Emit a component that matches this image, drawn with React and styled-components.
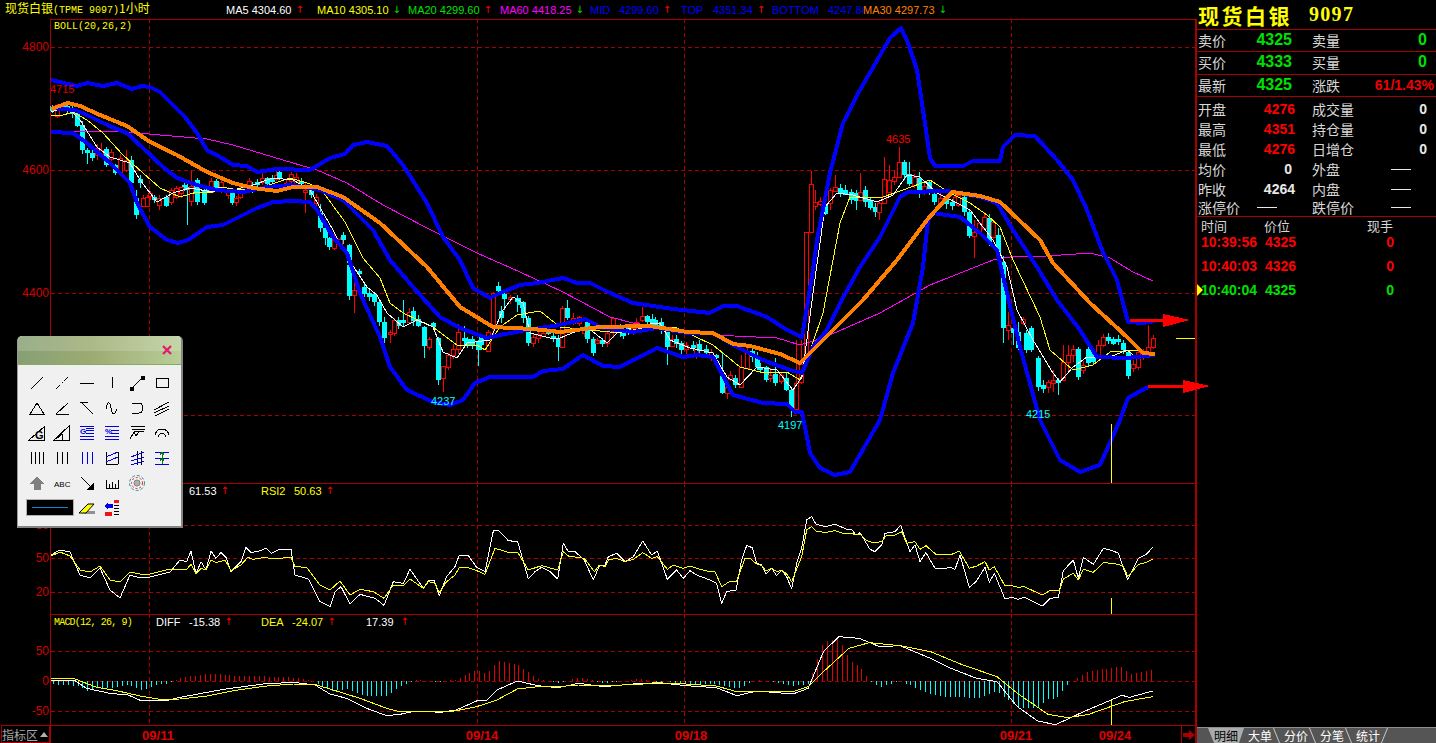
import React from "react";
import styled, { createGlobalStyle } from "styled-components";

const GlobalStyle = createGlobalStyle`
  html, body {
    margin: 0;
    padding: 0;
    background: #000;
  }
`;

const GRID = "#a80000";
const SANS = `"Liberation Sans", "Noto Sans CJK SC", sans-serif`;
const CJK = `"Noto Sans CJK SC", "Liberation Sans", sans-serif`;
const MONO = `"Liberation Mono", "Noto Sans CJK SC", monospace`;

// price lines, in page pixels
const UPPER =
  "51,80 77,86 87,83 103,86 117,83 132,89 142,86 150,87 160,92 173,105 185,117 197,133 207,150 220,157 233,165 247,166 257,172 277,169 310,170 330,158 345,154 353,145 367,142 387,146 403,165 427,203 443,237 460,260 473,288 490,298 500,293 520,285 537,283 563,278 577,283 590,283 610,293 633,303 673,309 710,313 723,306 737,306 767,317 787,330 802,337 813,270 817,240 830,173 843,123 860,90 890,38 901,28 908,43 917,70 923,110 930,158 935,166 963,166 973,161 1000,161 1003,147 1015,135 1035,136 1057,160 1073,180 1087,210 1102,250 1117,280 1128,322 1143,323 1155,321";
const MID =
  "51,108 75,110 87,115 107,125 127,133 143,148 163,167 177,178 197,185 217,190 243,192 267,187 293,185 320,190 343,200 373,230 390,260 413,287 440,317 460,328 487,338 500,335 527,330 560,325 585,319 603,328 633,332 657,328 687,333 713,333 733,345 763,360 790,370 802,373 813,347 827,330 840,303 860,267 880,237 900,197 908,192 947,191 980,197 997,203 1013,230 1037,267 1057,300 1080,330 1097,357 1127,358 1155,355";
const LOWER =
  "51,132 73,133 87,143 110,163 130,183 137,203 150,227 167,240 178,243 188,240 207,227 223,225 257,208 273,202 293,201 310,202 317,210 333,237 347,253 360,293 380,337 390,367 407,390 433,402 450,405 463,400 475,383 490,377 513,377 533,377 543,371 563,369 583,355 603,366 620,367 657,348 683,357 697,355 713,357 733,395 763,403 787,404 795,412 802,412 810,453 820,468 835,475 850,472 880,420 893,373 913,323 923,267 928,220 933,213 960,217 980,233 997,250 1007,293 1020,347 1040,420 1060,460 1080,472 1100,465 1120,420 1128,398 1148,387";
const MA30 =
  "51,109 68,103 80,106 100,115 127,126 150,142 177,155 207,172 233,183 253,188 277,191 293,187 317,187 343,197 380,223 427,267 460,307 493,327 533,329 560,332 600,327 650,326 687,332 713,333 733,344 750,346 780,354 800,363 830,333 863,300 897,260 927,220 952,192 980,196 1000,202 1040,240 1053,263 1090,303 1127,337 1143,353 1155,354";
const MA60 =
  "60,131 117,131 160,135 207,139 233,145 293,163 317,170 347,183 383,205 427,228 477,253 520,272 563,292 610,317 633,323 713,335 777,338 800,345 823,338 880,313 930,285 993,260 1010,257 1047,256 1090,253 1110,258 1133,272 1153,281";
const MA10 =
  "51,115 60,116 73,112 87,120 103,133 123,155 143,173 160,188 180,197 197,192 213,192 220,187 240,190 263,187 290,178 307,183 320,188 345,222 363,258 380,278 390,303 403,313 433,327 457,345 477,345 485,350 500,327 517,315 540,311 560,327 590,330 620,333 647,327 677,328 713,345 740,367 760,372 787,372 800,380 823,313 840,223 850,197 880,198 903,190 930,180 950,193 970,203 987,215 1000,227 1013,260 1040,317 1050,350 1073,370 1093,365 1110,352 1143,350";
const MA5 =
  "51,112 67,107 80,120 97,147 110,157 130,163 140,180 157,202 173,193 190,188 213,192 233,190 253,185 273,178 293,180 310,190 333,230 347,257 367,287 377,295 387,313 403,327 417,320 433,327 443,352 457,358 467,343 490,340 503,310 513,297 523,303 530,333 550,338 560,338 587,327 607,343 617,333 640,325 660,323 670,340 690,348 713,353 727,377 740,385 757,367 777,370 793,390 802,377 813,293 825,207 837,193 853,195 877,202 893,195 907,175 920,177 937,193 957,203 970,210 993,240 1007,267 1017,310 1033,340 1053,373 1060,382 1073,367 1087,357 1110,357 1127,350 1137,358 1150,357";

const parse = (text) => text.split(" ").map((p) => p.split(",").map(Number));
const toPoints = (pts) => pts.map((p) => p.join(",")).join(" ");
const fromZoom = (pts, ox, oy, sx = 3) => pts.map(([x, y]) => [ox + x / sx, oy + y / 3]);

const interp = (pts, x) => {
  if (x <= pts[0][0]) return pts[0][1];
  for (let i = 1; i < pts.length; i++) {
    if (x <= pts[i][0]) {
      const [x0, y0] = pts[i - 1];
      const [x1, y1] = pts[i];
      return y0 + ((y1 - y0) * (x - x0)) / (x1 - x0);
    }
  }
  return pts[pts.length - 1][1];
};

const seeded = (i) => {
  const v = Math.sin(i * 12.9898) * 43758.5453;
  return v - Math.floor(v);
};

// x, body top, body bottom, kind, wick top, wick bottom
const BIG_CANDLES = [
  [77, 113, 126, "c"], [82, 125, 150, "c"], [87, 150, 153, "c", 148, 164], [92, 153, 158, "c"], [97, 148, 155, "r", 144, 160],
  [101, 150, 154, "r", 143, 158], [106, 149, 165, "c"], [115, 165, 173, "c"], [120, 158, 172, "r"], [126, 160, 170, "r", 150, 172],
  [131, 160, 183, "c", 156, 186], [136, 198, 215, "c", 190, 219], [143, 198, 206, "r"], [147, 197, 206, "r"], [166, 197, 206, "c"],
  [171, 190, 202, "r"], [176, 188, 197, "r"], [181, 187, 193, "r", 187, 198], [187, 187, 190, "c", 184, 225], [191, 186, 201, "r", 170, 206],
  [197, 180, 202, "c", 178, 205], [204, 190, 203, "c"], [211, 181, 192, "r"], [216, 181, 188, "c"], [221, 182, 190, "r"],
  [232, 190, 203, "c"], [236, 198, 202, "r"], [240, 190, 197, "r"], [249, 181, 186, "r", 178, 186], [267, 178, 184, "c"], [279, 172, 178, "c", 168, 180],
  [286, 183, 186, "r"], [305, 190, 192, "r", 183, 213], [320, 213, 228, "c", 204, 232], [325, 228, 238, "c", 220, 245], [329, 238, 247, "c"],
  [334, 238, 248, "r"], [343, 235, 240, "c", 232, 244], [349, 245, 263, "c"], [349, 265, 296, "c"], [354, 290, 295, "r", 283, 313],
  [364, 287, 294, "c"], [369, 293, 297, "c"], [374, 294, 302, "c"], [379, 302, 322, "c"], [384, 322, 338, "c"], [390, 332, 334, "r", 330, 343],
  [394, 320, 333, "r", 318, 336], [403, 320, 323, "c", 300, 327], [409, 312, 322, "r"], [413, 311, 321, "c"], [418, 319, 326, "c"],
  [424, 327, 346, "c", 326, 358], [429, 339, 347, "r"], [438, 338, 380, "c"], [443, 366, 378, "r", 366, 392], [448, 355, 367, "r"],
  [453, 349, 355, "r"], [458, 332, 349, "r", 324, 354], [464, 338, 341, "c", 326, 345], [472, 339, 345, "c"], [478, 342, 350, "c", 340, 366],
  [488, 332, 351, "r"], [493, 293, 327, "r", 292, 334], [498, 286, 291, "c"], [504, 294, 299, "c", 292, 310], [510, 297, 299, "r"], [517, 298, 302, "c", 295, 312],
  [523, 302, 318, "c"], [528, 318, 343, "c", 316, 346], [533, 337, 343, "r"], [538, 334, 338, "r"], [543, 333, 336, "r"], [548, 330, 334, "c"],
  [553, 336, 338, "c"], [558, 338, 347, "c", 335, 361], [562, 308, 347, "r", 306, 348], [567, 308, 318, "c", 300, 320], [573, 318, 323, "r"],
  [579, 317, 323, "r"], [587, 322, 339, "c"], [593, 339, 353, "c", 337, 356], [597, 340, 343, "r"], [602, 340, 344, "c"], [607, 333, 343, "r"],
  [613, 318, 331, "r", 318, 338], [620, 327, 333, "c"], [636, 322, 327, "r"], [642, 316, 320, "r", 307, 322], [647, 316, 322, "c"], [655, 320, 325, "c"],
  [661, 322, 330, "c"], [667, 332, 347, "c", 330, 365], [672, 339, 346, "r"], [676, 339, 344, "c"], [681, 343, 350, "c"], [686, 345, 349, "r"],
  [693, 345, 348, "c"], [699, 344, 351, "c"], [706, 349, 353, "c"], [716, 355, 358, "c"], [722, 376, 393, "c", 353, 394], [727, 387, 393, "r", 385, 399],
  [741, 367, 387, "r", 355, 388], [747, 351, 368, "r", 348, 368], [752, 351, 357, "c"], [757, 358, 367, "c", 352, 370], [766, 367, 380, "c"],
  [770, 375, 378, "r", 368, 382], [775, 374, 383, "c", 358, 386], [781, 375, 381, "r"], [786, 378, 390, "c"], [791, 390, 408, "c", 388, 417],
  [796, 383, 409, "r", 340, 410], [801, 364, 382, "r", 340, 384], [806, 232, 360, "r", 232, 360], [811, 184, 232, "r", 171, 232], [815, 202, 206, "r", 190, 210],
  [820, 201, 204, "r", 197, 206], [825, 205, 214, "c"], [830, 190, 203, "r", 188, 210], [835, 187, 191, "r", 175, 192], [840, 188, 193, "c"], [845, 190, 195, "c", 185, 195],
  [851, 192, 200, "c"], [856, 193, 201, "c", 190, 210], [860, 192, 200, "r", 173, 200], [865, 190, 202, "c"], [870, 200, 208, "c", 198, 210], [875, 207, 212, "c"],
  [879, 203, 212, "r", 200, 220], [884, 179, 203, "r", 157, 204], [889, 180, 192, "r", 165, 192], [894, 177, 181, "r", 170, 185], [899, 162, 177, "r", 147, 178],
  [904, 162, 175, "c"], [909, 174, 184, "c", 162, 186], [914, 177, 185, "r"], [919, 178, 193, "c", 172, 198], [924, 186, 192, "r"], [929, 182, 193, "c"],
  [934, 194, 202, "c"], [940, 198, 203, "r"], [946, 199, 204, "c"], [952, 202, 206, "c"], [958, 195, 205, "r"], [964, 197, 212, "c"], [969, 212, 236, "c"],
  [974, 232, 236, "r", 220, 258], [979, 223, 232, "r"], [984, 217, 228, "r"], [989, 218, 243, "c"], [993, 222, 237, "r"], [998, 235, 257, "c", 228, 260],
  [1003, 262, 328, "c", 256, 343], [1008, 325, 330, "r", 312, 340], [1013, 328, 333, "c", 316, 345], [1018, 332, 348, "c", 322, 350], [1026, 333, 350, "c"], [1031, 328, 350, "c"],
  [1038, 358, 387, "c", 356, 391], [1043, 385, 389, "c", 380, 393], [1048, 382, 387, "r", 380, 393], [1053, 380, 383, "r", 370, 392], [1058, 380, 383, "c", 378, 395],
  [1063, 362, 380, "r", 345, 380], [1068, 355, 362, "r", 345, 372], [1073, 349, 355, "r", 345, 362], [1078, 349, 377, "c", 347, 380], [1083, 365, 370, "r"], [1088, 349, 363, "c"],
  [1093, 352, 362, "c"], [1098, 345, 355, "r"], [1103, 337, 345, "r", 334, 347], [1108, 337, 341, "c"], [1113, 339, 344, "c"], [1118, 339, 342, "c"], [1123, 343, 350, "c"],
  [1128, 352, 376, "c"], [1133, 364, 368, "r"], [1138, 352, 367, "r"], [1143, 352, 356, "r"], [1148, 347, 352, "r", 325, 352], [1153, 338, 347, "r"],
];

const buildCandles = () => {
  const line = parse(MA5);
  const filler = [];
  for (let i = 0; i < 225; i++) {
    const x = Math.round(52 + i * 4.88);
    if (x > 1150) break;
    if (BIG_CANDLES.some((c) => Math.abs(c[0] - x) < 3)) continue;
    const mid = interp(line, x) + (seeded(i) - 0.5) * 6;
    const half = 1 + seeded(i + 40) * 3;
    filler.push([
      x,
      Math.round(mid - half),
      Math.round(mid + half),
      seeded(i + 90) > 0.5 ? "c" : "r",
    ]);
  }
  return [...filler, ...BIG_CANDLES].map((c, i) => ({
    x: c[0],
    top: c[1],
    bottom: c[2],
    kind: c[3],
    high: c[4] ?? Math.round(c[1] - 1 - seeded(i) * 4),
    low: c[5] ?? Math.round(c[2] + 1 + seeded(i + 7) * 4),
  }));
};

const CANDLES = buildCandles();

// rsi, taken from the two zoomed strips
const RSI_WHITE = [
  [51, 555], [60, 550], [70, 552], [80, 575], [90, 578], [100, 568], [110, 590], [120, 598], [130, 575], [140, 578], [150, 577], [170, 572],
  ...fromZoom([[0,240],[20,245],[33,213],[48,282],[63,245],[78,270],[93,213],[108,235],[123,217],[138,232],[153,275],[183,245],[198,202],[213,217],[233,215],[258,205],[275,220],[300,207],[333,207],[345,285],[385,297],[420,365],[450,380],[465,335],[483,320],[510,372],[540,343],[585,355],[612,376],[640,305],[670,310],[690,268],[730,325],[745,303],[762,300],[778,347],[800,290],[825,260],[838,225],[865,227],[890,262],[915,275],[940,153],[955,150],[985,182],[1013,185],[1045,297],[1065,275],[1085,262],[1110,275],[1133,297],[1150,190],[1165,215],[1183,213],[1213,240],[1240,300],[1258,258],[1275,255],[1285,230],[1310,220],[1335,245],[1360,230],[1388,183],[1415,225],[1432,213],[1462,298],[1490,270],[1510,295]], 180, 480),
  ...fromZoom([[0,272],[20,285],[60,300],[80,310],[95,370],[110,335],[138,330],[155,240],[170,197],[187,203],[200,250],[215,255],[228,282],[245,265],[260,287],[275,270],[290,290],[305,327],[320,250],[335,205],[350,120],[365,110],[378,133],[408,140],[435,132],[470,148],[485,148],[498,165],[510,158],[540,208],[555,215],[575,195],[585,160],[615,155],[632,136],[660,215],[675,195],[690,245],[708,218],[735,265],[760,267],[780,262],[795,268],[810,225],[838,322],[858,305],[885,262],[898,307],[913,280],[945,357],[965,352],[985,358],[1003,352],[1050,375],[1060,376],[1080,355],[1105,352],[1120,272],[1150,240],[1165,295],[1180,232],[1210,253],[1240,205],[1270,213],[1285,220],[1313,300],[1345,235],[1370,222],[1388,202]], 690, 480),
];
const RSI_YELLOW = [
  [51, 556], [60, 552], [70, 556], [80, 570], [90, 572], [100, 566], [110, 580], [120, 582], [130, 572], [140, 574], [150, 574], [170, 569],
  ...fromZoom([[0,268],[20,268],[33,253],[48,282],[63,265],[78,270],[93,240],[108,248],[135,240],[153,272],[183,255],[203,232],[220,238],[255,232],[275,237],[333,232],[345,260],[380,262],[420,315],[450,330],[480,303],[510,345],[540,328],[580,335],[612,355],[640,315],[670,318],[690,297],[730,325],[745,305],[765,310],[778,338],[800,305],[825,285],[838,262],[860,262],[890,272],[915,283],[945,205],[985,217],[1013,217],[1045,270],[1085,257],[1133,270],[1150,215],[1165,228],[1213,235],[1243,275],[1258,255],[1275,260],[1285,240],[1310,235],[1335,245],[1360,238],[1388,218],[1415,235],[1432,230],[1462,268],[1480,255],[1510,265]], 180, 480),
  ...fromZoom([[0,258],[20,265],[50,273],[75,275],[95,320],[118,305],[140,303],[165,235],[180,235],[200,252],[215,257],[228,273],[245,265],[260,275],[275,270],[290,282],[305,305],[335,230],[350,150],[365,140],[380,155],[410,157],[435,152],[460,160],[485,160],[498,165],[510,162],[530,182],[550,188],[575,185],[590,165],[615,165],[635,155],[650,190],[675,185],[690,208],[708,197],[740,225],[785,223],[808,213],[838,265],[860,258],[885,245],[898,270],[913,260],[945,318],[965,317],[985,322],[1003,320],[1050,342],[1060,343],[1080,332],[1108,332],[1120,297],[1150,280],[1165,300],[1180,268],[1210,277],[1240,248],[1270,250],[1300,258],[1313,290],[1345,253],[1370,247],[1388,238]], 690, 480),
];

const MACD_WHITE = [
  ...fromZoom([[152,240],[225,242],[260,265],[330,280],[385,285],[425,303],[500,302],[540,292],[670,268],[790,252],[880,247],[945,255],[990,282],[1040,295],[1100,325],[1160,347]], 0, 600),
  ...fromZoom([[0,298],[30,288],[80,292],[110,285],[150,258],[170,255],[190,225],[230,198],[270,212],[310,218],[350,205],[400,215],[470,205],[520,205],[560,212],[620,218],[660,242],[700,228],[770,237],[800,220],[830,110],[860,65],[900,70],[940,95],[980,92],[1040,130],[1080,160],[1130,190],[1170,200],[1210,275],[1250,318],[1285,329],[1340,290],[1415,241],[1430,247],[1475,228]], 400, 615, 1.96),
];
const MACD_YELLOW = [
  ...fromZoom([[152,235],[220,235],[290,262],[350,272],[420,288],[480,298],[540,297],[620,288],[700,272],[800,258],[880,252],[950,255],[1000,270],[1080,295],[1160,325]], 0, 600),
  ...fromZoom([[0,290],[100,290],[150,275],[190,255],[230,222],[270,215],[310,215],[350,210],[400,212],[470,208],[500,203],[560,207],[620,213],[660,230],[770,230],[800,215],[830,170],[880,100],[920,83],[980,92],[1040,110],[1100,148],[1170,185],[1210,235],[1270,298],[1310,308],[1350,298],[1420,260],[1475,245]], 400, 615, 1.96),
];

const MACD_BARS = [];
for (let x = 53; x < 1155; x += 4.9) {
  const px = Math.round(x);
  const gap = (interp(MACD_YELLOW, px) - interp(MACD_WHITE, px)) * 2;
  MACD_BARS.push({ x: px, value: Math.max(-42, Math.min(46, gap)) });
}

const Screen = styled.div`
  position: relative;
  display: flex;
  width: 1436px;
  height: 743px;
  overflow: hidden;
  background: #000;
  font-family: ${SANS};
`;

const ChartColumn = styled.main`
  display: flex;
  flex-direction: column;
  width: 1197px;
  flex: none;
`;

const TopBar = styled.header`
  display: flex;
  align-items: center;
  height: 19px;
  padding-left: 5px;
  box-sizing: border-box;
`;

const ChartTitle = styled.div`
  width: 221px;
  flex: none;
  color: #ffff00;
  font-family: ${CJK};
  font-size: 12px;
  line-height: 16px;
  white-space: nowrap;
`;

const Mono = styled.span`
  font-family: ${MONO};
  font-size: 10px;
`;

const TopItem = styled.div`
  display: flex;
  width: ${(p) => p.$w || 91}px;
  flex: none;
  overflow: hidden;
  color: ${(p) => p.$color};
  font-size: 11px;
  line-height: 16px;
  white-space: pre;
`;

const ItemName = styled.span`
  min-width: ${(p) => p.$min || 0}px;
`;

const Trend = styled.span`
  margin-left: ${(p) => p.$gap ?? 4}px;
  color: ${(p) => (p.$dir === "up" ? "#ff0000" : "#00e000")};
  font-family: "DejaVu Sans", sans-serif;
  font-size: 10px;
`;

const Pane = styled.section`
  position: relative;
  height: ${(p) => p.$h}px;
  flex: none;
`;

const PlotSvg = styled.svg`
  display: block;
  overflow: visible;
  shape-rendering: crispEdges;
`;

const AxisText = styled.text`
  fill: #d40000;
  font-family: ${SANS};
  font-size: 12px;
  text-anchor: end;
`;

const PeakText = styled.text`
  fill: ${(p) => p.$color};
  font-family: ${SANS};
  font-size: 11px;
`;

const PaneLegend = styled.div`
  position: absolute;
  left: 54px;
  top: ${(p) => p.$top}px;
  display: flex;
  align-items: center;
  height: 14px;
  font-size: 11px;
  white-space: pre;
`;

const IndicatorName = styled.span`
  width: ${(p) => p.$w}px;
  flex: none;
  color: #ffff00;
  font-family: ${MONO};
  font-size: 10px;
  letter-spacing: ${(p) => p.$tight || 0}px;
`;

const LegendValue = styled.span`
  display: flex;
  width: ${(p) => p.$w}px;
  flex: none;
  color: ${(p) => p.$color};
`;

const DateAxis = styled.footer`
  display: flex;
  height: 18px;
  flex: none;
`;

const IndicatorTab = styled.div`
  display: flex;
  align-items: center;
  gap: 2px;
  width: 49px;
  margin-left: 1px;
  box-sizing: border-box;
  border: 1px solid ${GRID};
  color: #a8a8a8;
  font-family: ${CJK};
  font-size: 12px;
  white-space: nowrap;
`;

const TabCaret = styled.i`
  width: 0;
  height: 0;
  border-left: 4px solid transparent;
  border-right: 4px solid transparent;
  border-bottom: 5px solid #b0b0b0;
`;

const DateTrack = styled.div`
  flex: 1;
  box-sizing: border-box;
  border-top: 1px solid ${GRID};
  border-left: 1px solid ${GRID};
`;

const DateLabel = styled.text`
  fill: #e00000;
  font-family: ${SANS};
  font-size: 13px;
  font-weight: bold;
  text-anchor: middle;
`;

const NextButton = styled.div`
  display: flex;
  align-items: center;
  justify-content: center;
  width: 16px;
  box-sizing: border-box;
  border-top: 1px solid ${GRID};
  border-left: 1px solid ${GRID};
  border-right: 2px solid ${GRID};
`;

const SidePanel = styled.aside`
  display: flex;
  flex-direction: column;
  flex: 1;
  min-width: 0;
  color: #d8d8d8;
`;

const QuoteTitle = styled.div`
  display: flex;
  align-items: center;
  height: 30px;
  padding-left: 1px;
  box-sizing: border-box;
  border-bottom: 1px solid ${GRID};
  color: #ffff00;
  font-weight: bold;
`;

const TitleName = styled.span`
  width: 111px;
  font-family: ${CJK};
  font-size: 21px;
  letter-spacing: 2.5px;
`;

const TitleCode = styled.span`
  font-family: "Liberation Serif", serif;
  font-size: 20px;
  letter-spacing: 1.3px;
`;

const QuoteRow = styled.div`
  display: grid;
  grid-template-columns: 60px 37px 1fr auto;
  align-items: center;
  height: ${(p) => p.$h}px;
  padding: 0 9px ${(p) => (p.$line ? 2 : 0)}px 1px;
  box-sizing: border-box;
  border-bottom: ${(p) => (p.$line ? `1px solid ${GRID}` : "none")};
`;

const RowLabel = styled.span`
  padding-left: ${(p) => (p.$second ? 17 : 0)}px;
  font-family: ${CJK};
  font-size: 14px;
  line-height: 16px;
  white-space: nowrap;
`;

const RowValue = styled.span`
  justify-self: end;
  margin-right: ${(p) => p.$shift || 0}px;
  color: ${(p) => p.$color || "#e8e8e8"};
  font-size: ${(p) => p.$size || 14}px;
  font-weight: bold;
  line-height: 16px;
  white-space: nowrap;
`;

const Dash = styled.span`
  justify-self: end;
  width: 20px;
  height: 1px;
  margin-right: ${(p) => p.$shift}px;
  background: #e8e8e8;
`;

const StatBlock = styled.div`
  height: 120px;
  padding-top: 2px;
  box-sizing: border-box;
  border-bottom: 1px solid ${GRID};
`;

const TickList = styled.div`
  flex: 1;
`;

const TickHeader = styled.div`
  display: grid;
  grid-template-columns: 63px 103px auto;
  height: 13px;
  padding-left: 4px;
  font-family: ${CJK};
  font-size: 13px;
  line-height: 18px;
`;

const TickRow = styled.div`
  position: relative;
  display: grid;
  grid-template-columns: 64px 99px 30px;
  align-items: center;
  height: 24px;
  padding-left: 4px;
  color: ${(p) => p.$color};
  font-size: 14px;
  font-weight: bold;

  &::before {
    content: "";
    display: ${(p) => (p.$current ? "block" : "none")};
    position: absolute;
    left: 0;
    top: 6px;
    border-top: 6px solid transparent;
    border-bottom: 6px solid transparent;
    border-left: 6px solid #ffff00;
  }
`;

const TickQty = styled.span`
  justify-self: end;
`;

const TabBar = styled.nav`
  display: flex;
  height: 16px;
  flex: none;
  padding-left: 11px;
  box-sizing: border-box;
  border-top: 1px solid #909090;
  background: #555;
`;

const ViewTab = styled.div`
  position: relative;
  width: 36px;
  flex: none;
  padding-left: ${(p) => (p.$active ? 6 : 4)}px;
  box-sizing: border-box;
  background: ${(p) => (p.$active ? "#ababab" : "transparent")};
  clip-path: ${(p) => (p.$active ? "polygon(0 0, 100% 0, calc(100% - 5px) 100%, 6px 100%)" : "none")};
  color: ${(p) => (p.$active ? "#000" : "#fff")};
  font-family: ${CJK};
  font-size: 12px;
  line-height: 15px;
  white-space: nowrap;

  &::after {
    content: "";
    display: ${(p) => (p.$active ? "none" : "block")};
    position: absolute;
    top: 0;
    bottom: 0;
    right: 3px;
    width: 1px;
    background: #c8c8c8;
    transform: skewX(${(p) => (p.$last ? -22 : 22)}deg);
  }
`;

const ToolWindow = styled.div`
  position: absolute;
  left: 17px;
  top: 336px;
  width: 166px;
  height: 192px;
  box-sizing: border-box;
  border-right: 2px solid #858585;
  border-bottom: 2px solid #858585;
  border-left: 1px solid #9a9a9a;
  border-radius: 5px 5px 0 0;
  background: #f0f0f0;
`;

const ToolHeader = styled.div`
  display: flex;
  align-items: center;
  justify-content: flex-end;
  height: 29px;
  padding-right: 8px;
  box-sizing: border-box;
  border-bottom: 1px solid #86ab63;
  border-radius: 5px 5px 0 0;
  background: linear-gradient(180deg, rgba(255, 255, 255, 0.16) 0 54%, transparent 54%),
    linear-gradient(90deg, #86a074, #9dab72 45%, #b9ce98);
`;

const ToolGrid = styled.div`
  display: grid;
  grid-template-columns: repeat(6, 25px);
  grid-auto-rows: 25px;
  padding: 5px 0 0 6px;
`;

const ToolCell = styled.button`
  display: flex;
  align-items: center;
  justify-content: center;
  grid-column: span ${(p) => p.$span || 1};
  padding: 0;
  border: 0;
  background: none;
`;

const LineSwatch = styled.span`
  display: flex;
  align-items: center;
  justify-content: center;
  width: 46px;
  height: 15px;
  margin-left: 2px;
  box-sizing: border-box;
  border: 1px solid #000;
  outline: 1px solid #b0b0b0;
  background: #000;

  &::after {
    content: "";
    width: 36px;
    height: 1px;
    background: #1482d2;
  }
`;

const Glyph = ({ children }) => (
  <svg width="18" height="18" viewBox="0 0 18 18" fill="none" stroke="#000" strokeWidth="1" shapeRendering="crispEdges">
    {children}
  </svg>
);

const BLUE = "#0000e0";

const TOOL_ICONS = [
  <path d="M3 15L15 3" />,
  <path d="M3 15L7 11M9 9L10 8M11 7L15 3" />,
  <path d="M2 9H16" />,
  <path d="M9 3V14" />,
  <g><path d="M3 15L15 3" /><rect x="2" y="13" width="3" height="3" fill="#000" /><rect x="13" y="2" width="3" height="3" fill="#000" /></g>,
  <rect x="3" y="4" width="12" height="9" />,
  <path d="M2 15H16L9 4Z" />,
  <path d="M3 15H16M3 15L15 4" />,
  <path d="M2 3H10M3 3L15 15" />,
  <path d="M3 10C4 2 7 2 8 9S11 17 14 10" />,
  <path d="M4 4H11C16 4 16 14 11 14H4" />,
  <path d="M1 11L16 3M1 14L16 7M2 17L16 10" />,
  <g><path d="M1 16H16V3Z" /><text x="7" y="15" fill="#000" stroke="none" fontSize="11" fontWeight="bold" fontFamily="Liberation Sans">G</text></g>,
  <path d="M1 16H16V2ZM3 15L9 10L10 16" />,
  <g stroke={BLUE}><path d="M2 2H16M2 15H16M2 12H16M8 9H16M8 6H16M8 4H16" /><text x="2" y="10" fill={BLUE} stroke="none" fontSize="8" fontWeight="bold" fontFamily="Liberation Sans">G</text></g>,
  <g stroke={BLUE}><path d="M2 2H16M2 15H16M2 12H16M8 9H16M8 6H16" /><text x="2" y="10" fill={BLUE} stroke="none" fontSize="8" fontWeight="bold" fontFamily="Liberation Sans">%</text></g>,
  <g><path d="M3 2H17M4 5H17" /><path d="M6 7H16" /><path d="M2 15L6 8L8 12L11 8" /></g>,
  <path d="M2 11C4 3 14 3 16 11M5 13C7 8 11 8 13 13" />,
  <path d="M3 3V15M7 3V15M11 3V15M15 3V15" />,
  <path d="M4 3V15M9 3V15M14 3V15" />,
  <path d="M4 3V15M9 3V15M14 3V15" stroke={BLUE} />,
  <g><path d="M3 3V15H15M15 3V15" /><path d="M3 8L15 3M3 13L15 8" stroke={BLUE} /></g>,
  <g><path d="M9 2V16M13 2V16" /><path d="M3 8L16 3M3 12L16 8M3 16L16 12" stroke={BLUE} /></g>,
  <g><path d="M2 3H16M2 9H16M2 15H16" stroke={BLUE} /><path d="M9 3V15M7 6L9 3L11 6M7 12L9 9L11 12" stroke="#008000" /></g>,
  <path d="M9 3L15 9H12V15H6V9H3Z" fill="#808080" stroke="#808080" />,
  <text x="1" y="13" fill="#000" stroke="none" fontSize="8" fontFamily="Liberation Sans">ABC</text>,
  <g><path d="M3 3L13 13" /><path d="M15 15V10L10 15Z" fill="#000" /></g>,
  <path d="M3 6V14H15V6M6 10V14M9 8V14M12 10V14" />,
  <g>
    <circle cx="9" cy="9" r="7.5" stroke="#2c8c8c" strokeDasharray="3 2" shapeRendering="auto" />
    <circle cx="9" cy="9" r="5.5" stroke="#d02020" strokeDasharray="2 2" shapeRendering="auto" />
    <circle cx="9" cy="9" r="3" fill="#b0b0b0" stroke="#808080" shapeRendering="auto" />
  </g>,
];

const CloseMark = () => (
  <svg width="12" height="12" viewBox="0 0 12 12">
    <path d="M2 2L10 10M10 2L2 10" stroke="#e0206e" strokeWidth="2.4" />
  </svg>
);

const EraserIcon = () => (
  <svg width="18" height="18" viewBox="0 0 18 18">
    <path d="M6 15H17V12H9Z" fill="#909090" />
    <path d="M1 14L10 5H16L8 14Z" fill="#ffff00" stroke="#000" />
  </svg>
);

const ColorListIcon = () => (
  <svg width="18" height="18" viewBox="0 0 18 18" shapeRendering="crispEdges">
    <path d="M1 7L5 3V5H10V9H5V11Z" fill="#0000e8" />
    <rect x="11" y="1" width="5" height="3" fill="#e81818" />
    <rect x="11" y="6" width="5" height="1" fill="#000" />
    <rect x="11" y="9" width="5" height="1" fill="#000" />
    <rect x="11" y="12" width="5" height="1" fill="#000" />
    <rect x="11" y="15" width="5" height="1" fill="#000" />
    <rect x="2" y="13" width="7" height="4" fill="#e81818" />
  </svg>
);

const ToolPalette = () => (
  <ToolWindow>
    <ToolHeader>
      <CloseMark />
    </ToolHeader>
    <ToolGrid>
      {TOOL_ICONS.map((icon, i) => (
        <ToolCell key={i}>
          <Glyph>{icon}</Glyph>
        </ToolCell>
      ))}
      <ToolCell />
      <ToolCell $span={2}>
        <LineSwatch />
      </ToolCell>
      <ToolCell>
        <EraserIcon />
      </ToolCell>
      <ToolCell>
        <ColorListIcon />
      </ToolCell>
    </ToolGrid>
  </ToolWindow>
);

const Frame = ({ top, height, rows, children }) => (
  <PlotSvg width="1197" height={height} viewBox={`0 ${top} 1197 ${height}`}>
    {rows.map((y) => (
      <line key={y} x1="51" x2="1195" y1={y + 0.5} y2={y + 0.5} stroke={GRID} strokeDasharray="4 3" />
    ))}
    {[149, 477, 684, 1011].map((x) => (
      <line key={x} x1={x + 0.5} x2={x + 0.5} y1={top} y2={top + height} stroke={GRID} strokeDasharray="4 3" />
    ))}
    <line x1="50" x2="1196" y1={top + 0.5} y2={top + 0.5} stroke={GRID} />
    <line x1="50.5" x2="50.5" y1={top} y2={top + height} stroke={GRID} />
    <line x1="1196" x2="1196" y1={top} y2={top + height} stroke={GRID} strokeWidth="2" />
    {children}
  </PlotSvg>
);

const Candle = ({ x, top, bottom, high, low, kind }) => {
  const filled = kind === "c";
  const color = filled ? "#00ffff" : "#ff0000";
  return (
    <g>
      <line x1={x + 0.5} x2={x + 0.5} y1={high} y2={low} stroke={color} />
      <rect
        x={filled ? x - 2 : x - 1.5}
        y={filled ? top : top + 0.5}
        width={filled ? 5 : 4}
        height={Math.max(bottom - top, 1)}
        fill={filled ? color : "#000"}
        stroke={filled ? "none" : color}
      />
    </g>
  );
};

const Curve = ({ points, color, width = 1 }) => (
  <polyline points={points} fill="none" stroke={color} strokeWidth={width} strokeLinejoin="round" />
);

const RedArrow = ({ x1, x2, y }) => (
  <g>
    <rect x={x1} y={y - 1} width={x2 - x1 - 25} height="3" fill="#ff0000" />
    <polygon points={`${x2 - 27},${y - 6} ${x2},${y} ${x2 - 27},${y + 7}`} fill="#ff0000" />
  </g>
);

const PricePane = () => (
  <Pane $h={464}>
    <Frame top={19} height={464} rows={[47, 170, 293, 415]}>
      {[[4800, 47], [4600, 170], [4400, 293]].map(([label, y]) => (
        <AxisText key={label} x="49" y={y + 4}>{label}</AxisText>
      ))}
      {CANDLES.map((c, i) => (
        <Candle key={i} {...c} />
      ))}
      <Curve points={MA60} color="#ff00ff" />
      <Curve points={MA10} color="#ffff00" />
      <Curve points={MA5} color="#ffffff" />
      <Curve points={UPPER} color="#0000ff" width={4} />
      <Curve points={LOWER} color="#0000ff" width={4} />
      <Curve points={MID} color="#0000ff" width={4} />
      <Curve points={MA30} color="#ff8000" width={4} />
      <PeakText x="50" y="93" $color="#e00000">4715</PeakText>
      <PeakText x="886" y="143" $color="#ff0000">4635</PeakText>
      <PeakText x="431" y="405" $color="#00ffff">4237</PeakText>
      <PeakText x="778" y="429" $color="#00ffff">4197</PeakText>
      <PeakText x="1026" y="418" $color="#00ffff">4215</PeakText>
      <line x1="1176" x2="1195" y1="338.5" y2="338.5" stroke="#ffff00" />
      <line x1="1111.5" x2="1111.5" y1="424" y2="483" stroke="#ffff00" />
      <RedArrow x1={1130} x2={1190} y={320} />
      <RedArrow x1={1148} x2={1210} y={386} />
    </Frame>
    <PaneLegend $top={0}>
      <IndicatorName $w={90}>BOLL(20,26,2)</IndicatorName>
    </PaneLegend>
  </Pane>
);

const RsiPane = () => (
  <Pane $h={131}>
    <Frame top={483} height={131} rows={[525, 558, 592]}>
      {[[80, 525], [50, 558], [20, 592]].map(([label, y]) => (
        <AxisText key={label} x="49" y={y + 4}>{label}</AxisText>
      ))}
      <Curve points={toPoints(RSI_WHITE)} color="#ffffff" />
      <Curve points={toPoints(RSI_YELLOW)} color="#ffff00" />
      <line x1="1111.5" x2="1111.5" y1="598" y2="614" stroke="#ffff00" />
    </Frame>
    <PaneLegend $top={1}>
      <IndicatorName $w={135}>RSI(6,12)</IndicatorName>
      <LegendValue $w={72} $color="#fff">
        61.53<Trend $dir="up">↑</Trend>
      </LegendValue>
      <LegendValue $w={33} $color="#ffff00">RSI2</LegendValue>
      <LegendValue $w={60} $color="#ffff00">
        50.63<Trend $dir="up">↑</Trend>
      </LegendValue>
    </PaneLegend>
  </Pane>
);

const MacdPane = () => (
  <Pane $h={111}>
    <Frame top={614} height={111} rows={[651, 681, 711]}>
      {[[50, 651], [0, 681], [-50, 711]].map(([label, y]) => (
        <AxisText key={label} x="49" y={y + 4}>{label}</AxisText>
      ))}
      {MACD_BARS.map((bar) => (
        <line
          key={bar.x}
          x1={bar.x + 0.5}
          x2={bar.x + 0.5}
          y1={681}
          y2={681 - bar.value}
          stroke={bar.value >= 0 ? "#e00000" : "#00ffff"}
        />
      ))}
      <Curve points={toPoints(MACD_WHITE)} color="#ffffff" />
      <Curve points={toPoints(MACD_YELLOW)} color="#ffff00" />
      <line x1="1111.5" x2="1111.5" y1="700" y2="725" stroke="#ffff00" />
    </Frame>
    <PaneLegend $top={1}>
      <IndicatorName $w={102} $tight={-0.8}>MACD(12, 26, 9)</IndicatorName>
      <LegendValue $w={33} $color="#fff">DIFF</LegendValue>
      <LegendValue $w={72} $color="#fff">
        -15.38<Trend $dir="up">↑</Trend>
      </LegendValue>
      <LegendValue $w={31} $color="#ffff00">DEA</LegendValue>
      <LegendValue $w={74} $color="#ffff00">
        -24.07<Trend $dir="up">↑</Trend>
      </LegendValue>
      <LegendValue $w={60} $color="#fff">
        17.39<Trend $dir="up" $gap={7}>↑</Trend>
      </LegendValue>
    </PaneLegend>
  </Pane>
);

const TOP_ITEMS = [
  { name: "MA5", value: "4304.60", color: "#fff", dir: "up" },
  { name: "MA10", value: "4305.10", color: "#ffff00", dir: "down" },
  { name: "MA20", value: "4299.60", color: "#00e000", dir: "up", w: 92 },
  { name: "MA60", value: "4418.25", color: "#ff00ff", dir: "down", w: 90 },
  { name: "MID", value: "4299.60", color: "#0000ff", dir: "up", min: 29 },
  { name: "TOP", value: "4351.34", color: "#0000ff", dir: "up", min: 32 },
  { name: "BOTTOM", value: "4247.80", color: "#0000ff", dir: "up", min: 56 },
  { name: "MA30", value: "4297.73", color: "#ff8000", dir: "down" },
];

const QUOTES = [
  { a: "卖价", b: "4325", c: "卖量", d: "0", h: 22 },
  { a: "买价", b: "4333", c: "买量", d: "0", h: 23 },
  { a: "最新", b: "4325", c: "涨跌", d: "61/1.43%", h: 22, change: true },
];

const STATS = [
  { a: "开盘", b: "4276", c: "成交量", d: "0", color: "#ff0000", h: 20 },
  { a: "最高", b: "4351", c: "持仓量", d: "0", color: "#ff0000", h: 20 },
  { a: "最低", b: "4276", c: "日增仓", d: "0", color: "#ff0000", h: 20 },
  { a: "均价", b: "0", c: "外盘", color: "#e8e8e8", h: 20, shift: 3 },
  { a: "昨收", b: "4264", c: "内盘", color: "#e8e8e8", h: 20 },
  { a: "涨停价", c: "跌停价", h: 16 },
];

const TICKS = [
  { time: "10:39:56", price: "4325", color: "#ff0000" },
  { time: "10:40:03", price: "4326", color: "#ff0000" },
  { time: "10:40:04", price: "4325", color: "#00e000", current: true },
];

const DATES = [[157, "09/11"], [481, "09/14"], [690, "09/18"], [1015, "09/21"], [1114, "09/24"]];

export default function App() {
  return (
    <Screen>
      <GlobalStyle />
      <ChartColumn>
        <TopBar>
          <ChartTitle>
            现货白银<Mono>(TPME 9097)</Mono>1小时
          </ChartTitle>
          {TOP_ITEMS.map((item) => (
            <TopItem key={item.name} $color={item.color} $w={item.w}>
              <ItemName $min={item.min}>{item.min ? item.name : `${item.name} `}</ItemName>
              {item.value}
              <Trend $dir={item.dir}>{item.dir === "up" ? "↑" : "↓"}</Trend>
            </TopItem>
          ))}
        </TopBar>
        <PricePane />
        <RsiPane />
        <MacdPane />
        <DateAxis>
          <IndicatorTab>
            指标区
            <TabCaret />
          </IndicatorTab>
          <DateTrack>
            <svg width="1129" height="17" viewBox="50 726 1129 17">
              {DATES.map(([x, label]) => (
                <DateLabel key={label} x={x} y="740">{label}</DateLabel>
              ))}
            </svg>
          </DateTrack>
          <NextButton>
            <svg width="12" height="10" viewBox="0 0 12 10">
              <path d="M0 3H6V0L12 5L6 10V7H0Z" fill="#a80000" />
            </svg>
          </NextButton>
        </DateAxis>
      </ChartColumn>

      <SidePanel>
        <QuoteTitle>
          <TitleName>现货白银</TitleName>
          <TitleCode>9097</TitleCode>
        </QuoteTitle>
        {QUOTES.map((row) => (
          <QuoteRow key={row.a} $h={row.h} $line>
            <RowLabel>{row.a}</RowLabel>
            <RowValue $color="#00e000" $size={16} $shift={3}>{row.b}</RowValue>
            <RowLabel $second>{row.c}</RowLabel>
            {row.change ? (
              <RowValue $color="#f00000" $shift={-7}>{row.d}</RowValue>
            ) : (
              <RowValue $color="#00e000" $size={16}>{row.d}</RowValue>
            )}
          </QuoteRow>
        ))}
        <StatBlock>
          {STATS.map((row) => (
            <QuoteRow key={row.a} $h={row.h}>
              <RowLabel>{row.a}</RowLabel>
              {row.b ? <RowValue $color={row.color} $shift={row.shift}>{row.b}</RowValue> : <Dash $shift={18} />}
              <RowLabel $second>{row.c}</RowLabel>
              {row.d ? <RowValue>{row.d}</RowValue> : <Dash $shift={16} />}
            </QuoteRow>
          ))}
        </StatBlock>
        <TickList>
          <TickHeader>
            <span>时间</span>
            <span>价位</span>
            <span>现手</span>
          </TickHeader>
          {TICKS.map((tick) => (
            <TickRow key={tick.time} $color={tick.color} $current={tick.current}>
              <span>{tick.time}</span>
              <span>{tick.price}</span>
              <TickQty>0</TickQty>
            </TickRow>
          ))}
        </TickList>
        <TabBar>
          <ViewTab $active>明细</ViewTab>
          <ViewTab>大单</ViewTab>
          <ViewTab>分价</ViewTab>
          <ViewTab>分笔</ViewTab>
          <ViewTab $last>统计</ViewTab>
        </TabBar>
      </SidePanel>
      <ToolPalette />
    </Screen>
  );
}
